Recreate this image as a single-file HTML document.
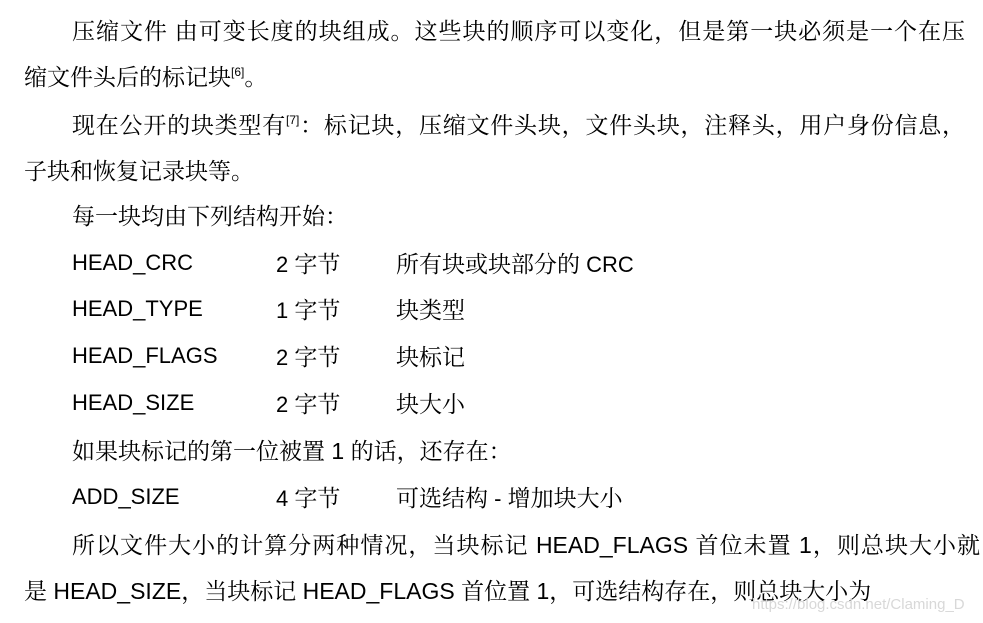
<!DOCTYPE html>
<html><head><meta charset="utf-8"><style>
body{margin:0;width:983px;height:623px;background:#fff;position:relative;overflow:hidden;color:#000;font-family:"Liberation Sans","Noto Serif CJK SC",serif;font-size:23px}
.l{position:absolute;height:30px;line-height:30px;white-space:nowrap}
.j{text-align:justify;text-align-last:justify;white-space:normal}
.s{position:absolute;height:30px;line-height:30px;font-family:"Liberation Sans",sans-serif;font-size:22px}
.c{font-family:"Noto Serif CJK SC",serif;font-size:23px}
sup{font-size:12px;line-height:0;vertical-align:baseline;position:relative;top:-9px;font-family:"Liberation Sans",sans-serif}
.wm{position:absolute;left:752px;top:596px;font-family:"Liberation Sans",sans-serif;font-size:15px;color:#d8d8d8}
</style></head><body>
<div class="l j" style="left:72px;top:15px;width:893px"><span class="c">压缩文件 由可变长度的块组成。这些块的顺序可以变化，但是第一块必须是一个在压</span></div>
<div class="l c" style="left:24px;top:61px">缩文件头后的标记块<sup>[6]</sup>。</div>
<div class="l j" style="left:72px;top:109px;width:893px"><span class="c">现在公开的块类型有<sup>[7]</sup>：标记块，压缩文件头块，文件头块，注释头，用户身份信息，</span></div>
<div class="l c" style="left:24px;top:155px">子块和恢复记录块等。</div>
<div class="l c" style="left:72px;top:200px">每一块均由下列结构开始：</div>

<div class="s" style="left:72px;top:248px">HEAD_CRC</div><div class="s" style="left:276px;top:248px">2 <span class="c">字节</span></div><div class="s" style="left:396px;top:248px"><span class="c">所有块或块部分的</span> CRC</div>
<div class="s" style="left:72px;top:294px">HEAD_TYPE</div><div class="s" style="left:276px;top:294px">1 <span class="c">字节</span></div><div class="s" style="left:396px;top:294px"><span class="c">块类型</span></div>
<div class="s" style="left:72px;top:341px">HEAD_FLAGS</div><div class="s" style="left:276px;top:341px">2 <span class="c">字节</span></div><div class="s" style="left:396px;top:341px"><span class="c">块标记</span></div>
<div class="s" style="left:72px;top:388px">HEAD_SIZE</div><div class="s" style="left:276px;top:388px">2 <span class="c">字节</span></div><div class="s" style="left:396px;top:388px"><span class="c">块大小</span></div>
<div class="l" style="left:72px;top:435px"><span class="c">如果块标记的第一位被置</span> 1 <span class="c">的话，还存在：</span></div>
<div class="s" style="left:72px;top:482px">ADD_SIZE</div><div class="s" style="left:276px;top:482px">4 <span class="c">字节</span></div><div class="s" style="left:396px;top:482px"><span class="c">可选结构</span> - <span class="c">增加块大小</span></div>
<div class="l j" style="left:72px;top:529px;width:908px"><span class="c">所以文件大小的计算分两种情况，当块标记</span> HEAD_FLAGS <span class="c">首位未置</span> 1<span class="c">，则总块大小就</span></div>
<div class="l" style="left:24px;top:575px"><span class="c">是</span> HEAD_SIZE<span class="c">，当块标记</span> HEAD_FLAGS <span class="c">首位置</span> 1<span class="c">，可选结构存在，则总块大小为</span></div>
<div class="wm">https://blog.csdn.net/Claming_D</div>
</body></html>
